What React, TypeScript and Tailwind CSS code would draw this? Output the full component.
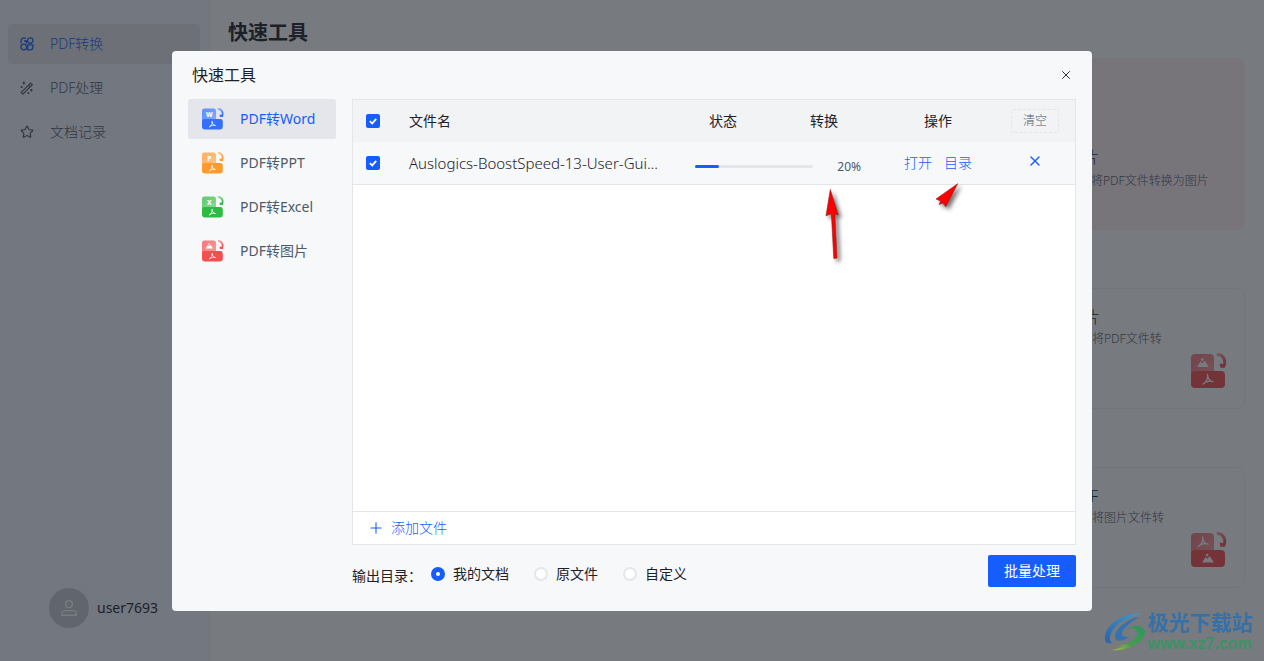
import React, { useState } from 'react';
import { Plus, Star, X } from 'lucide-react';

type Glyph = 'W' | 'P' | 'X' | 'image' | 'pdf';

interface FileIconProps {
  id: string;
  color: string;
  light: string;
  top: Glyph;
  bottom?: Glyph;
  className?: string;
}

const IconGlyph: React.FC<{ glyph: Glyph; x: number; y: number }> = ({ glyph, x, y }) => {
  if (glyph === 'image') {
    return (
      <g transform={`translate(${x} ${y})`} fill="#fff">
        <path d="M-5.2 4 Q-5.8 4 -5.4 3.2 L-2.8 -1 Q-2.2 -1.8 -1.6 -1 L-.6 .4 L1 -1.8 Q1.6 -2.6 2.2 -1.8 L5.4 3.2 Q5.8 4 5.2 4 Z" />
        <circle cx="-.8" cy="-3.4" r="1.3" />
      </g>
    );
  }
  if (glyph === 'pdf') {
    return (
      <path
        transform={`translate(${x} ${y})`}
        d="M-5 4.5 C-2 3 .5 -1 -.5 -5 C-.6 -1 2 2 5 2.2 C2 1 -2 1.8 -5 4.5 Z"
        fill="none"
        stroke="#fff"
        strokeWidth="1.3"
        strokeLinejoin="round"
      />
    );
  }
  return (
    <text x={x} y={y + 4} textAnchor="middle" fontSize="11" fontWeight="800" fill="#fff">
      {glyph}
    </text>
  );
};

const FileIcon: React.FC<FileIconProps> = ({ id, color, light, top, bottom = 'pdf', className }) => (
  <svg viewBox="0 0 36 36" className={className} aria-hidden="true">
    <defs>
      <linearGradient id={id} x1="0" y1="0" x2="1" y2="1">
        <stop offset="0" stopColor={color} stopOpacity="0.75" />
        <stop offset="1" stopColor={light} />
      </linearGradient>
      <linearGradient id={`${id}-arrow`} x1="0" y1="0" x2="1" y2="1">
        <stop offset="0" stopColor={light} />
        <stop offset="1" stopColor={color} />
      </linearGradient>
    </defs>
    <rect x="0" y="1" width="23" height="24" rx="4" fill={`url(#${id})`} />
    <rect x="0" y="18" width="34" height="17" rx="4" fill={color} />
    <path d="M27 1.6 C32.5 2 35 7.5 33 13" fill="none" stroke={`url(#${id}-arrow)`} strokeWidth="3" strokeLinecap="round" />
    <path d="M28.8 10.6 L29.2 14.2 Q29.4 14.8 30.2 14.8 L34 14.6 L33.6 11.6 Z" fill={color} />
    <IconGlyph glyph={top} x={12} y={10} />
    <IconGlyph glyph={bottom} x={17} y={26.5} />
  </svg>
);

const ConvertIcon = () => (
  <svg viewBox="0 0 14 14" className="size-3.5" fill="none" stroke="currentColor" strokeWidth="1.3" aria-hidden="true">
    <circle cx="10.2" cy="3.6" r="2.7" />
    <circle cx="3.8" cy="10" r="2.9" />
    <path d="M1 6.4 V4 Q1 1.2 3.8 1.2 H6" />
    <path d="M4 4 H6.4 V6.4" />
    <path d="M7.8 7.8 H12.9 V10 Q12.9 12.9 10 12.9 H7.8 Z" />
  </svg>
);

const WandIcon = () => (
  <svg viewBox="0 0 14 14" className="size-3.5" fill="none" stroke="currentColor" strokeWidth="1.2" aria-hidden="true">
    <path d="M1.2 11.4 L10.6 2 L12.3 3.7 L2.9 13.1 Z M8.4 4.2 L10.1 5.9" />
    <path d="M3.8 .6 V3.4 M2.4 2 H5.2 M1.6 5 V7 M.6 6 H2.6 M11.4 8 V10.4 M10.2 9.2 H12.6 M8.4 11 V13 M7.4 12 H9.4" />
  </svg>
);

const navItems = [
  { label: 'PDF转换', icon: <ConvertIcon />, active: true },
  { label: 'PDF处理', icon: <WandIcon />, active: false },
  { label: '文档记录', icon: <Star className="size-3.5" strokeWidth={2} />, active: false },
];

const tools: { label: string; color: string; light: string; glyph: Glyph }[] = [
  { label: 'PDF转Word', color: '#3370ff', light: '#8fb3ff', glyph: 'W' },
  { label: 'PDF转PPT', color: '#ff9a2e', light: '#ffc894', glyph: 'P' },
  { label: 'PDF转Excel', color: '#2dbb42', light: '#94dfa0', glyph: 'X' },
  { label: 'PDF转图片', color: '#f54e51', light: '#f9a5a7', glyph: 'image' },
];

const outputs = ['我的文档', '原文件', '自定义'];

const Sidebar = () => (
  <aside className="flex w-[210px] shrink-0 flex-col justify-between bg-[#f5f7ff] px-2 pt-6 pb-[33px]">
    <nav className="flex flex-col gap-1">
      {navItems.map((item) => (
        <a
          key={item.label}
          href="#"
          className={`mr-0.5 flex h-10 items-center gap-4 rounded-sm pl-3 text-sm ${
            item.active ? 'bg-[#e5e6eb] text-[#165dff]' : 'text-[#4e5969]'
          }`}
        >
          {item.icon}
          {item.label}
        </a>
      ))}
    </nav>
    <div className="flex items-center gap-2 pl-[41px] text-sm font-normal text-[#1d2129]">
      <span className="flex size-10 items-center justify-center rounded-full bg-[#c9cdd4] text-white">
        <svg viewBox="0 0 16 16" className="size-4" fill="none" stroke="currentColor" strokeWidth="1.4" aria-hidden="true">
          <circle cx="8" cy="4.2" r="3.4" />
          <path d="M.8 15.2 V13.6 Q.8 10.6 3.8 10.6 H12.2 Q15.2 10.6 15.2 13.6 V15.2 Z" />
        </svg>
      </span>
      user7693
    </div>
  </aside>
);

const ToolCards = () => (
  <main className="flex-1 bg-white pr-[19px] pl-[18px]">
    <h1 className="pt-[17px] text-xl leading-8 font-bold text-[#1d2129]">快速工具</h1>
    <div className="flex flex-col items-end gap-[58px] pt-[9px]">
      <section className="h-[172px] w-[328px] rounded-lg bg-[#fff0f2] pt-[87px] pl-[174px]">
        <h2 className="-ml-2 text-base leading-6 text-[#1d2129]">片</h2>
        <p className="text-xs leading-6 text-[#4e5969]">将PDF文件转换为图片</p>
      </section>
      <section className="h-[121px] w-[328px] rounded-lg border border-[#f2f3f5] pt-4 pl-[174px]">
        <h2 className="-ml-2 text-base leading-6 text-[#1d2129]">片</h2>
        <p className="text-xs leading-5 text-[#4e5969]">将PDF文件转</p>
        <FileIcon id="card-image" color="#f54e51" light="#f9a5a7" top="image" className="mt-1 ml-[99px] size-9" />
      </section>
      <section className="h-[121px] w-[328px] rounded-lg border border-[#f2f3f5] pt-4 pl-[174px]">
        <h2 className="-ml-0.5 text-base leading-6 text-[#1d2129]">F</h2>
        <p className="text-xs leading-5 text-[#4e5969]">将图片文件转</p>
        <FileIcon id="card-pdf" color="#f54e51" light="#f9a5a7" top="pdf" bottom="image" className="mt-1 ml-[99px] size-9" />
      </section>
    </div>
  </main>
);

interface TickProps {
  label: string;
  checked: boolean;
  onChange: (checked: boolean) => void;
}

const Tick: React.FC<TickProps> = ({ label, checked, onChange }) => (
  <label className="relative mx-auto flex size-3.5 items-center justify-center">
    <input
      type="checkbox"
      aria-label={label}
      checked={checked}
      onChange={(e) => onChange(e.target.checked)}
      className="peer size-3.5 shrink-0 appearance-none rounded-xs border-2 border-[#e5e6eb] bg-white checked:border-[#165dff] checked:bg-[#165dff]"
    />
    <svg
      viewBox="0 0 14 14"
      className="pointer-events-none absolute inset-0 hidden size-3.5 peer-checked:block"
      fill="none"
      stroke="#fff"
      strokeWidth="1.8"
      aria-hidden="true"
    >
      <path d="M3.8 7.2 L6.2 9.4 L10.2 4.8" />
    </svg>
  </label>
);

const FileTable = () => {
  const [checked, setChecked] = useState(true);
  const progress = 20;

  return (
    <div className="border border-[#e5e6eb] bg-white">
      <div className="min-h-[411px]">
        <table className="w-full table-fixed border-collapse text-sm text-[#1d2129]">
          <colgroup>
            <col className="w-10" />
            <col />
            <col className="w-[88px]" />
            <col className="w-[114px]" />
            <col className="w-[114px]" />
            <col className="w-20" />
          </colgroup>
          <thead>
            <tr className="h-[42px] bg-[#f2f3f5]">
              <th><Tick label="全选" checked={checked} onChange={setChecked} /></th>
              <th className="px-4 text-left font-normal">文件名</th>
              <th className="font-normal">状态</th>
              <th className="font-normal">转换</th>
              <th className="font-normal">操作</th>
              <th className="font-light">
                <button type="button" className="h-6 w-12 rounded-xs border border-dashed border-[#e5e6eb] text-xs text-[#4e5969]">
                  清空
                </button>
              </th>
            </tr>
          </thead>
          <tbody>
            <tr className="h-[42px] border-b border-[#e5e6eb] bg-[#f7f8fa]">
              <td><Tick label="选择文件" checked={checked} onChange={setChecked} /></td>
              <td className="truncate pl-4 text-[15px] leading-5">Auslogics-BoostSpeed-13-User-Gui...</td>
              <td colSpan={2} className="pt-2 pr-5 pl-4">
                <div className="flex items-center gap-6">
                  <div className="h-[3px] flex-1 rounded-full bg-[#e5e6eb]">
                    <div className="h-full rounded-full bg-[#165dff]" style={{ width: `${progress}%` }} />
                  </div>
                  <span className="text-xs font-normal text-[#4e5969]">{progress}%</span>
                </div>
              </td>
              <td>
                <div className="flex justify-center gap-3 text-[#165dff]">
                  <a href="#">打开</a>
                  <a href="#">目录</a>
                </div>
              </td>
              <td className="pb-1">
                <button type="button" aria-label="删除" className="mx-auto flex text-[#165dff]">
                  <X className="size-4" strokeWidth={2} />
                </button>
              </td>
            </tr>
          </tbody>
        </table>
      </div>
      <button type="button" className="flex h-[33px] w-full items-center gap-2 border-t border-[#e5e6eb] pl-4 text-sm text-[#165dff]">
        <Plus className="size-3.5 scale-125" strokeWidth={1.5} />
        添加文件
      </button>
    </div>
  );
};

const OutputBar = () => {
  const [output, setOutput] = useState(outputs[0]);

  return (
    <div className="flex items-center justify-between pt-2.5 text-sm text-[#1d2129]">
      <fieldset className="flex items-center pt-1.5 font-normal">
        <span className="w-[79px] pt-1">输出目录：</span>
        <div className="flex gap-[25px]">
          {outputs.map((name) => (
            <label key={name} className="flex items-center gap-2">
              <input
                type="radio"
                name="output"
                checked={output === name}
                onChange={() => setOutput(name)}
                className="size-3.5 appearance-none rounded-full border-2 border-[#e5e6eb] bg-white checked:border-5 checked:border-[#165dff]"
              />
              {name}
            </label>
          ))}
        </div>
      </fieldset>
      <button type="button" className="h-8 rounded-xs bg-[#165dff] px-4 text-sm font-normal text-white">批量处理</button>
    </div>
  );
};

// Red pointers drawn over the progress and directory cells
const Pointers = () => (
  <svg viewBox="0 0 150 90" className="pointer-events-none absolute top-[129px] right-[122px] h-[90px] w-[150px] drop-shadow-[3px_3px_2px_rgba(0,0,0,0.55)]" aria-hidden="true">
    <g fill="#f00" stroke="#8a2020" strokeWidth="0.6">
      <path d="M10.3 9.5 L18.3 35 L14.8 33.5 L17 78 L13.8 78.5 L11.4 33.8 L6 35.8 Z" />
      <path d="M137.7 3.7 L125.7 26.7 L123 23 L119.3 24.5 L120.5 21 L116 19 Z" />
    </g>
  </svg>
);

const Dialog = () => (
  <div className="fixed inset-0 flex items-center justify-center bg-[#1d2129]/60 pt-px">
    <div role="dialog" aria-label="快速工具" className="relative w-full max-w-[920px] rounded-sm bg-[#f7f8fa] px-4 pb-6">
      <header className="flex h-12 items-center justify-between pr-[3px] pl-1 text-base text-[#1d2129]">
        <h2 className="font-normal">快速工具</h2>
        <button type="button" aria-label="关闭" className="flex">
          <X className="size-3.5" strokeWidth={1.6} />
        </button>
      </header>
      <div className="flex gap-4">
        <nav className="flex w-[148px] shrink-0 flex-col gap-1">
          {tools.map((tool, i) => (
            <button
              key={tool.label}
              type="button"
              className={`flex h-10 items-center gap-4 rounded-xs pl-3.5 text-sm font-normal ${
                i === 0 ? 'bg-[#e5e6eb] text-[#165dff]' : 'text-[#4e5969]'
              }`}
            >
              <FileIcon id={`tool-${i}`} color={tool.color} light={tool.light} top={tool.glyph} className="size-[22px]" />
              {tool.label}
            </button>
          ))}
        </nav>
        <div className="min-w-0 flex-1">
          <FileTable />
          <OutputBar />
        </div>
      </div>
      <Pointers />
    </div>
  </div>
);

const Watermark = () => (
  <div className="fixed right-[11px] bottom-[7px] flex items-center gap-0.5">
    <svg viewBox="0 0 42 40" className="h-10 w-[42px]" aria-hidden="true">
      <defs>
        <linearGradient id="swirl-blue" x1="1" y1="0" x2="0" y2="1">
          <stop offset="0" stopColor="#3d9bd0" />
          <stop offset="1" stopColor="#2b62a8" />
        </linearGradient>
        <linearGradient id="swirl-green" x1="1" y1="0" x2="0" y2="1">
          <stop offset="0" stopColor="#2a9660" />
          <stop offset="0.6" stopColor="#4b9b50" />
          <stop offset="1" stopColor="#c2b83a" />
        </linearGradient>
      </defs>
      <path d="M39 2 C20 0 2 12 1 25 C0 30 3 32 8 31 C4 28 6 20 12 14 C19 7 29 4 39 2 Z" fill="url(#swirl-blue)" />
      <path d="M35 5 C23 7 11 17 11 25 C11 30 18 30 25 25 C18 26 16 22 20 17 C24 12 30 8 35 5 Z" fill="#3572b2" />
      <path d="M23 17 C31 11 41 14 41 21 C40 31 22 40 6 38 C11 38 15 36 19 34 L14 34 C25 32 33 27 33 21 C33 16 28 15 23 17 Z" fill="url(#swirl-green)" />
    </svg>
    <div className="flex flex-col whitespace-nowrap">
      <span className="text-[21px] leading-6 font-bold text-[#3470aa]">极光下载站</span>
      <span className="font-['Liberation_Sans',sans-serif] text-base leading-5 font-bold text-[#389563]">www.xz7.com</span>
    </div>
  </div>
);

const App = () => (
  <div className="flex min-h-screen font-['Noto_Sans','Noto_Sans_CJK_SC',sans-serif] font-light">
    <Sidebar />
    <ToolCards />
    <Dialog />
    <Watermark />
  </div>
);

export default App;
